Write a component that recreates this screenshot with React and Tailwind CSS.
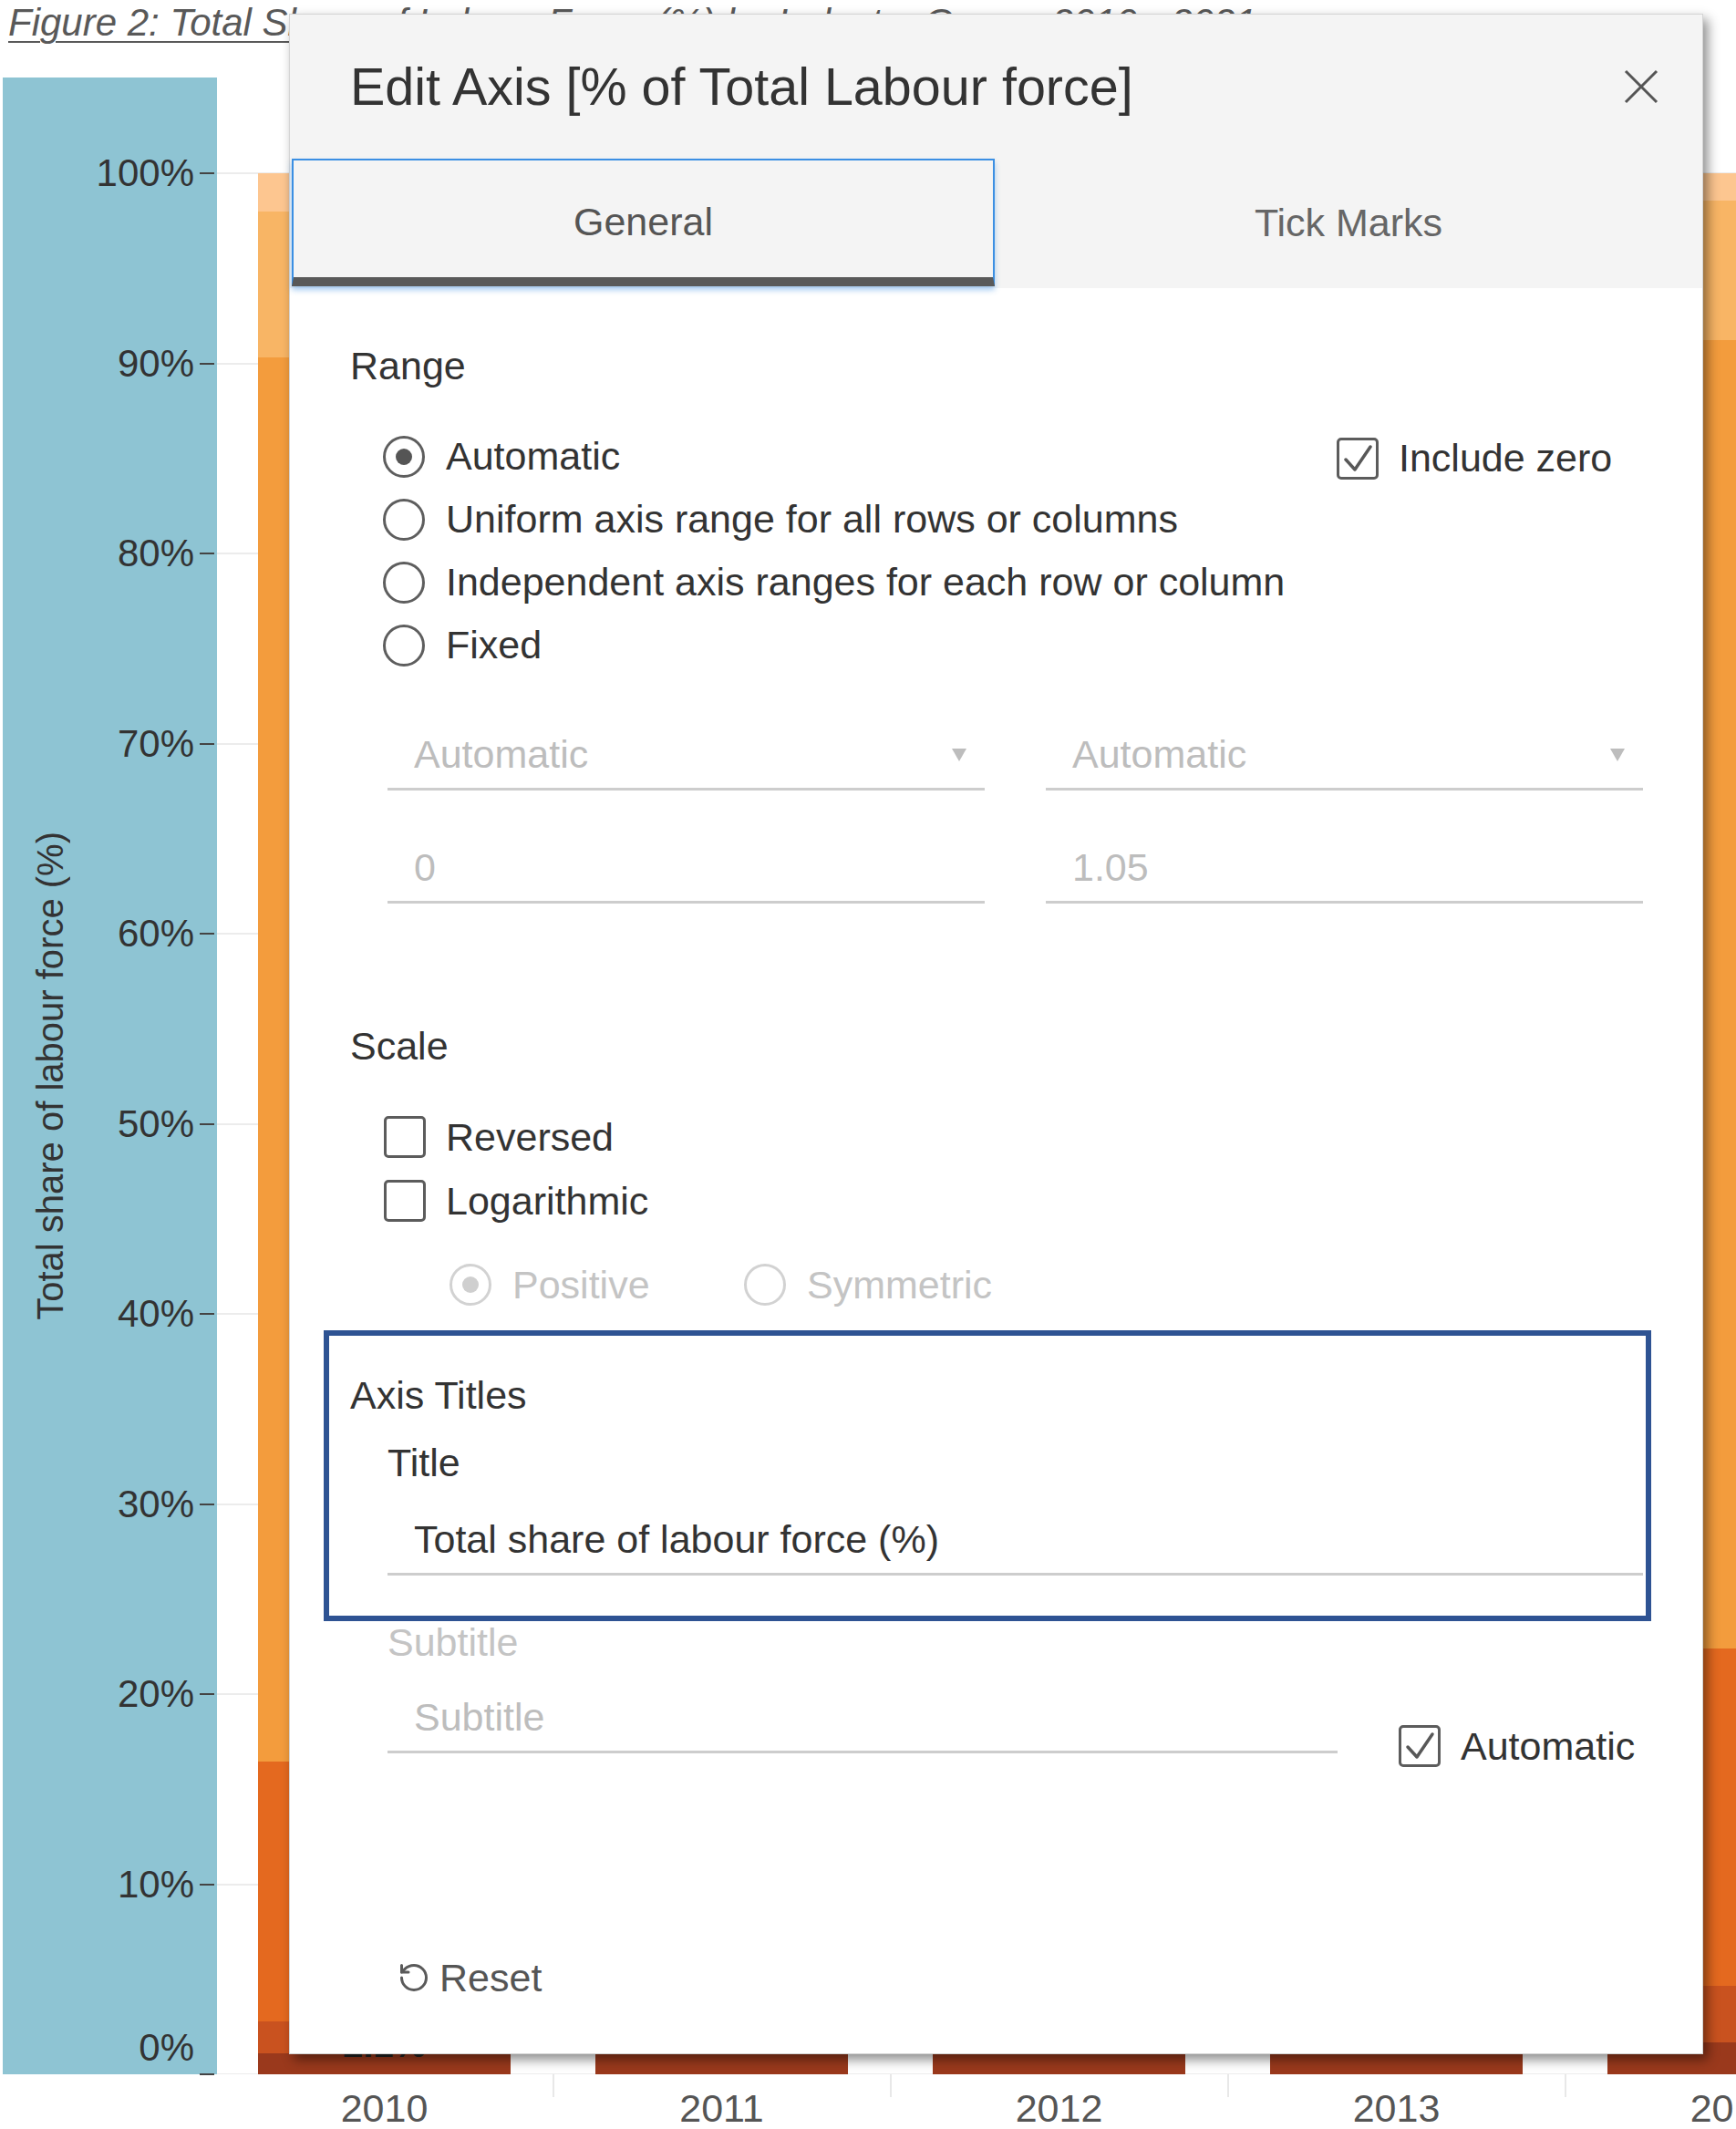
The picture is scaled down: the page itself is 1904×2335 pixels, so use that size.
import React from 'react'
import { RotateCcw } from 'lucide-react'

// chart geometry: the 100% line sits 105px below the top of the chart row, 0% is 2085px lower
const PLOT_TOP = 105
const PLOT_H = 2085
const ticks = [100, 90, 80, 70, 60, 50, 40, 30, 20, 10, 0]

const bars = [
  { year: '2010', label: '2.1%', segs: [[42, '#fdc690'], [160, '#f8b565'], [1540, '#f39c3d'], [285, '#e4691f'], [35, '#c9521f'], [23, '#9a391c']] },
  { year: '2011', segs: [[40, '#fdc690'], [158, '#f8b565'], [1545, '#f39c3d'], [282, '#e4691f'], [37, '#c9521f'], [23, '#9a391c']] },
  { year: '2012', segs: [[38, '#fdc690'], [155, '#f8b565'], [1550, '#f39c3d'], [280, '#e4691f'], [39, '#c9521f'], [23, '#9a391c']] },
  { year: '2013', segs: [[35, '#fdc690'], [154, '#f8b565'], [1490, '#f39c3d'], [335, '#e4691f'], [48, '#c9521f'], [23, '#9a391c']] },
  { year: '2014', segs: [[30, '#fdc690'], [153, '#f8b565'], [1435, '#f39c3d'], [370, '#e4691f'], [62, '#c9521f'], [35, '#9a391c']] },
]

function Radio({ checked, disabled }) {
  return (
    <span className={disabled
      ? 'w-[46px] h-[46px] shrink-0 rounded-full border-[3px] border-[#d2d2d2] flex items-center justify-center'
      : 'w-[46px] h-[46px] shrink-0 rounded-full border-[3px] border-[#5e5e5e] flex items-center justify-center'}>
      {checked && (
        <span className={disabled ? 'w-[18px] h-[18px] rounded-full bg-[#cfcfcf]' : 'w-[18px] h-[18px] rounded-full bg-[#555]'} />
      )}
    </span>
  )
}

function Checkbox({ checked }) {
  return (
    <span className="w-[46px] h-[46px] shrink-0 rounded-[5px] border-[3px] border-[#5c5c5c] relative">
      {checked && (
        <svg viewBox="0 0 46 46" className="absolute -left-[3px] -top-[3px] w-[46px] h-[46px]">
          <polyline points="10,24 20,35 37,10" fill="none" stroke="#585858" strokeWidth="3.5" strokeLinecap="round" strokeLinejoin="round" />
        </svg>
      )}
    </span>
  )
}

function Field({ value, placeholder, arrow, width, className = '' }) {
  return (
    <div className={`h-[76px] shrink-0 border-b-[3px] border-[#cdcdcd] flex items-center justify-between pl-[29px] pr-[20px] ${className}`} style={{ width }}>
      <span className={placeholder ? 'text-[#bdbdbd]' : 'text-[#333]'}>{value}</span>
      {arrow && (
        <svg viewBox="0 0 16 14" className="w-[16px] h-[14px]">
          <polygon points="0,0 16,0 8,14" fill="#bdbdbd" />
        </svg>
      )}
    </div>
  )
}

function EditAxisDialog() {
  return (
    <div className="absolute left-[317px] top-[15px] w-[1551px] h-[2238px] bg-white border border-[#d4d4d4] shadow-[5px_6px_12px_rgba(0,0,0,0.45)] text-[43px] text-[#333]">
      <div className="bg-[#f4f4f4]">
        <div className="h-[158px] flex items-center justify-between pl-[66px] pr-[48px]">
          <span className="text-[57.5px] text-[#333]">Edit Axis [% of Total Labour force]</span>
          <svg viewBox="0 0 38 38" className="w-[38px] h-[38px]">
            <path d="M2 2 L36 36 M36 2 L2 36" stroke="#555" strokeWidth="3" fill="none" />
          </svg>
        </div>
        <div className="h-[142px] flex pl-[2px]">
          <div className="w-[771px] h-[140px] pt-[6px] border-2 border-[#3b8fe3] border-b-[10px] border-b-[#595959] shadow-[0_4px_6px_rgba(59,143,227,0.45)] flex items-center justify-center text-[#555]">
            General
          </div>
          <div className="flex-1 h-[140px] flex items-center justify-center text-[#666]">Tick Marks</div>
        </div>
      </div>

      <div className="flex flex-col">
        <div className="mt-[50px] ml-[66px] h-[70px] flex items-center">Range</div>

        <div className="mt-[30px] ml-[102px] flex">
          <div className="w-[1046px] flex flex-col">
            <div className="h-[69px] flex items-center gap-[23px]"><Radio checked />Automatic</div>
            <div className="h-[69px] flex items-center gap-[23px]"><Radio />Uniform axis range for all rows or columns</div>
            <div className="h-[69px] flex items-center gap-[23px]"><Radio />Independent axis ranges for each row or column</div>
            <div className="h-[69px] flex items-center gap-[23px]"><Radio />Fixed</div>
          </div>
          <div className="h-[73px] flex items-center gap-[22px]"><Checkbox checked />Include zero</div>
        </div>

        <div className="mt-[49px] ml-[107px] flex gap-[67px]">
          <Field value="Automatic" placeholder arrow width={655} />
          <Field value="Automatic" placeholder arrow width={655} />
        </div>
        <div className="mt-[48px] ml-[107px] flex gap-[67px]">
          <Field value="0" placeholder width={655} />
          <Field value="1.05" placeholder width={655} />
        </div>

        <div className="mt-[121px] ml-[66px] h-[70px] flex items-center">Scale</div>
        <div className="mt-[30px] ml-[103px] h-[70px] flex items-center gap-[22px]"><Checkbox />Reversed</div>
        <div className="ml-[103px] h-[70px] flex items-center gap-[22px]"><Checkbox />Logarithmic</div>
        <div className="mt-[22px] ml-[175px] h-[70px] flex items-center text-[#c4c4c4]">
          <div className="w-[323px] flex items-center gap-[23px]"><Radio checked disabled />Positive</div>
          <div className="flex items-center gap-[23px]"><Radio disabled />Symmetric</div>
        </div>

        <div className="mt-[15px] ml-[37px] w-[1456px] border-[6px] border-[#2e5393] pt-[30px] pb-[44px] pl-[23px] pr-[3px]">
          <div className="h-[70px] flex items-center">Axis Titles</div>
          <div className="mt-[4px] ml-[41px] h-[70px] flex items-center">Title</div>
          <Field value="Total share of labour force (%)" width={1377} className="mt-[13px] ml-[41px]" />
        </div>

        <div className="ml-[107px] h-[46px] flex items-center text-[#c4c4c4]">Subtitle</div>
        <div className="mt-[23px] ml-[107px] flex items-start gap-[67px]">
          <Field value="Subtitle" placeholder width={1042} />
          <div className="mt-[43px] h-[50px] flex items-center gap-[22px]"><Checkbox checked />Automatic</div>
        </div>

        <div className="mt-[199px] ml-[118px] h-[60px] flex items-center gap-[10px] text-[#555]">
          <RotateCcw className="w-[36px] h-[36px] text-[#5a5a5a]" strokeWidth={2} />
          Reset
        </div>
      </div>
    </div>
  )
}

export default function App() {
  return (
    <div className="relative w-[1904px] h-[2335px] bg-white overflow-hidden font-['Liberation_Sans',Arial,sans-serif]">
      <div className="h-[85px] pl-[9px] pt-[4px]">
        <span className="text-[42px] leading-none italic text-[#595959] underline decoration-2 underline-offset-[6px] whitespace-nowrap">
          Figure 2: Total Share of Labour Force (%) by Industry Group, 2010 - 2021
        </span>
      </div>

      <div className="flex h-[2190px]">
        {/* y axis panel */}
        <div className="relative shrink-0 ml-[3px] w-[235px] bg-[#8ec4d3] flex items-center">
          <div className="ml-[29px] [writing-mode:vertical-rl] rotate-180 text-[40px] leading-[46px] text-[#333] whitespace-nowrap">
            Total share of labour force (%)
          </div>
          {ticks.map((t) => {
            const y = PLOT_TOP + ((100 - t) / 100) * PLOT_H
            return (
              <React.Fragment key={t}>
                <div className="absolute right-[25px] -translate-y-1/2 text-[42px] leading-none text-[#333]" style={{ top: t === 0 ? y - 29 : y }}>
                  {t}%
                </div>
                <div className="absolute left-[216px] w-[16px] h-[2px] bg-[#444]" style={{ top: y - 1 }} />
              </React.Fragment>
            )
          })}
        </div>

        {/* plot area */}
        <div className="relative flex-1 min-w-0 overflow-hidden">
          {ticks.map((t) => (
            <div key={t} className="absolute left-0 right-0 h-[2px] bg-[#ececec]" style={{ top: PLOT_TOP + ((100 - t) / 100) * PLOT_H - 1 }} />
          ))}
          <div className="relative h-full flex items-end pl-[45px] gap-[93px]">
            {bars.map((b) => (
              <div key={b.year} className="relative w-[277px] shrink-0 flex flex-col">
                {b.segs.map(([h, c], i) => (
                  <div key={i} style={{ height: h, backgroundColor: c }} />
                ))}
                {b.label && (
                  <div className="absolute left-0 right-0 bottom-[13px] text-center text-[40px] leading-none font-bold text-[#222]">{b.label}</div>
                )}
              </div>
            ))}
          </div>
        </div>
      </div>

      {/* x axis */}
      <div className="flex h-[74px] pl-[283px]">
        {bars.map((b, i) => (
          <React.Fragment key={b.year}>
            <div className="w-[277px] shrink-0 flex items-center justify-center text-[43px] text-[#555]">{b.year}</div>
            {i < bars.length - 1 && (
              <div className="w-[93px] shrink-0 flex justify-center">
                <div className="w-[2px] h-[25px] bg-[#e8e8e8]" />
              </div>
            )}
          </React.Fragment>
        ))}
      </div>

      <EditAxisDialog />
    </div>
  )
}
